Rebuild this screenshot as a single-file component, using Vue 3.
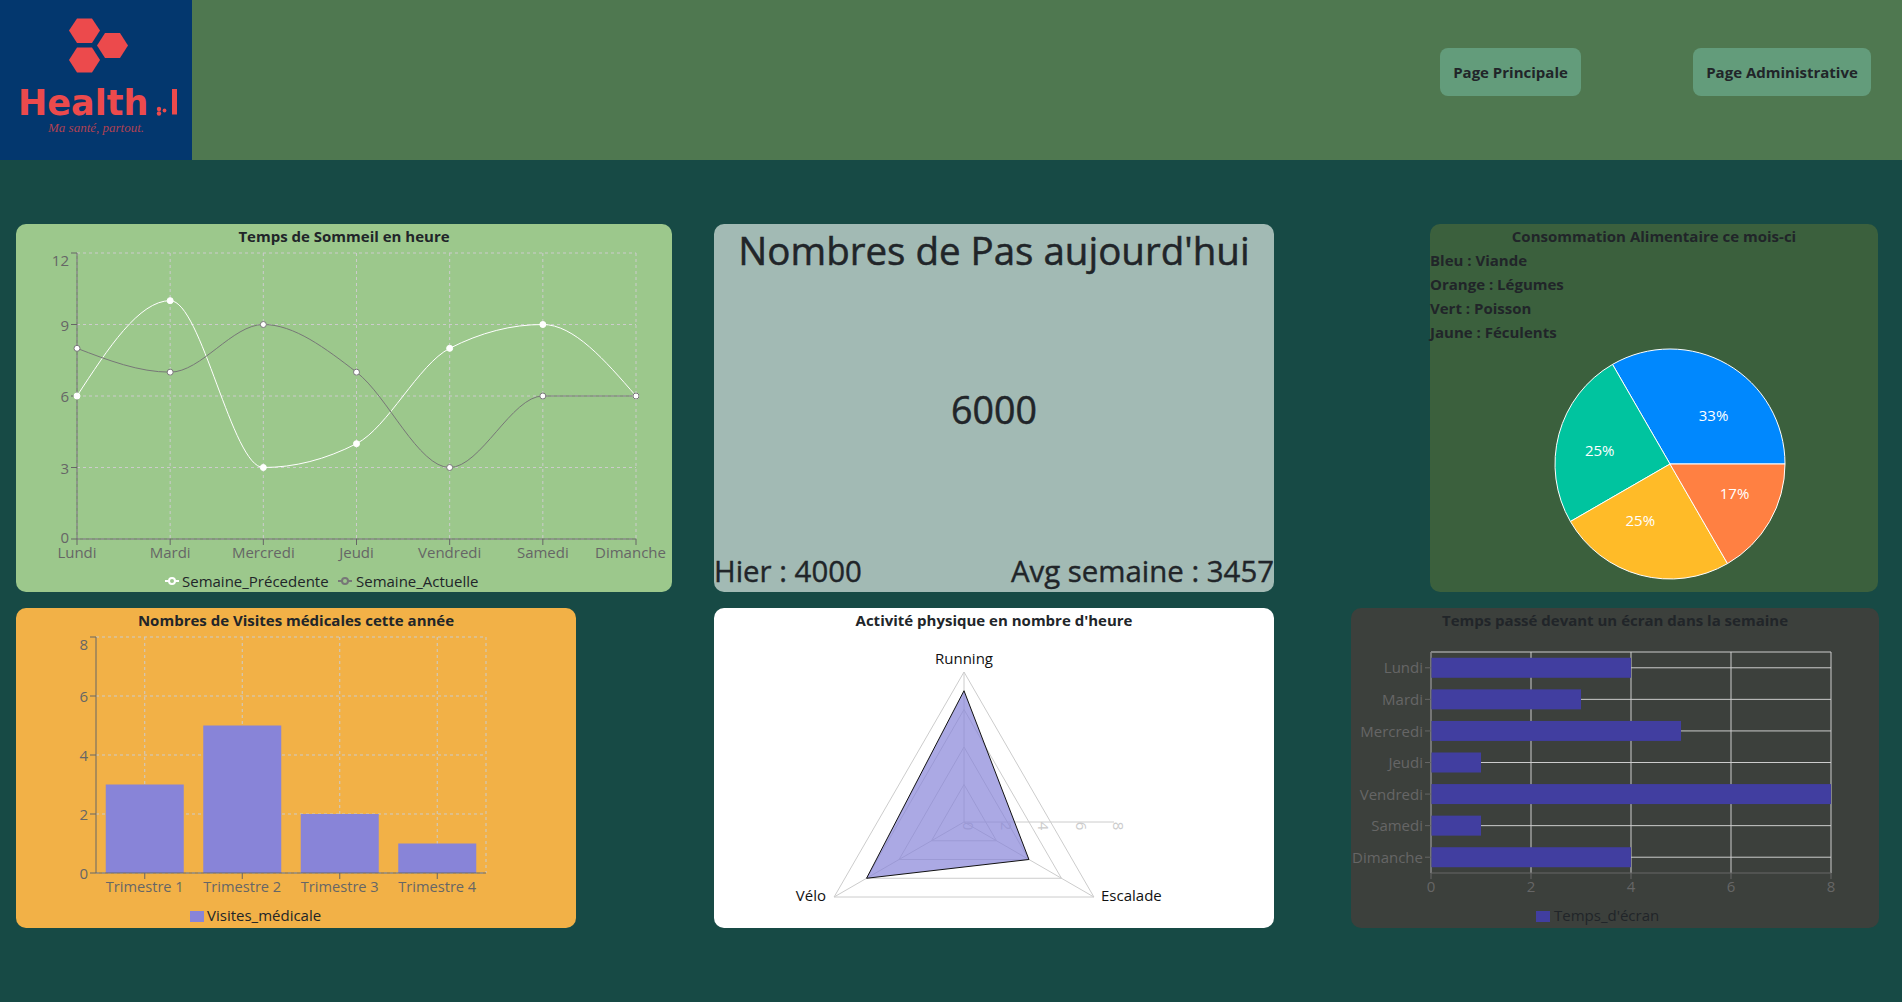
<script setup>
const days = ['Lundi', 'Mardi', 'Mercredi', 'Jeudi', 'Vendredi', 'Samedi', 'Dimanche']

function monotone(pts) {
  const n = pts.length
  const t = new Array(n).fill(0)
  const sign = (v) => (v < 0 ? -1 : 1)
  for (let i = 1; i < n - 1; i++) {
    const [x0, y0] = pts[i - 1]
    const [x1, y1] = pts[i]
    const [x2, y2] = pts[i + 1]
    const h0 = x1 - x0
    const h1 = x2 - x1
    const s0 = (y1 - y0) / h0
    const s1 = (y2 - y1) / h1
    const p = (s0 * h1 + s1 * h0) / (h0 + h1)
    t[i] = (sign(s0) + sign(s1)) * Math.min(Math.abs(s0), Math.abs(s1), 0.5 * Math.abs(p)) || 0
  }
  const h = pts[1][0] - pts[0][0]
  t[0] = (3 * (pts[1][1] - pts[0][1])) / h / 2 - t[1] / 2
  t[n - 1] = (3 * (pts[n - 1][1] - pts[n - 2][1])) / h / 2 - t[n - 2] / 2
  let d = `M${pts[0][0]},${pts[0][1]}`
  for (let i = 1; i < n; i++) {
    const dx = (pts[i][0] - pts[i - 1][0]) / 3
    d += `C${pts[i - 1][0] + dx},${pts[i - 1][1] + dx * t[i - 1]},${pts[i][0] - dx},${pts[i][1] - dx * t[i]},${pts[i][0]},${pts[i][1]}`
  }
  return d
}

/* Sommeil */
const sl = { x0: 77, x1: 636, top: 253, bottom: 539 }
const slX = (i) => sl.x0 + (i * (sl.x1 - sl.x0)) / 6
const slY = (v) => sl.bottom - (v * (sl.bottom - sl.top)) / 12
const prevPts = [6, 10, 3, 4, 8, 9, 6].map((v, i) => [slX(i), slY(v)])
const currPts = [8, 7, 9, 7, 3, 6, 6].map((v, i) => [slX(i), slY(v)])
const prevPath = monotone(prevPts)
const currPath = monotone(currPts)
const slYTicks = [0, 3, 6, 9, 12]
const slYLabel = (v) => (v === 12 ? 260 : v === 0 ? 537 : slY(v))
const slXs = days.map((d, i) => ({ d, x: slX(i), lx: i === 6 ? 630.5 : slX(i) }))

/* Visites */
const vi = { x0: 96, x1: 486, top: 637, bottom: 873 }
const viY = (v) => vi.bottom - (v * (vi.bottom - vi.top)) / 8
const viBand = (vi.x1 - vi.x0) / 4
const viBars = [3, 5, 2, 1].map((v, i) => ({
  label: `Trimestre ${i + 1}`,
  cx: vi.x0 + viBand * (i + 0.5),
  x: vi.x0 + viBand * i + 9.75,
  y: viY(v),
  h: vi.bottom - viY(v),
}))
const viTicks = [0, 2, 4, 6, 8]

/* Aliments */
const pc = { x: 1670, y: 464, r: 115 }
const polar = (cx, cy, r, deg) => [
  cx + r * Math.cos((deg * Math.PI) / 180),
  cy - r * Math.sin((deg * Math.PI) / 180),
]
const slices = [
  { a0: 0, a1: 120, fill: '#0088fe', label: '33%', dy: 1 },
  { a0: 120, a1: 210, fill: '#00c49f', label: '25%', dy: 1 },
  { a0: 210, a1: 300, fill: '#ffbb28', label: '25%', dy: 0 },
  { a0: 300, a1: 360, fill: '#ff8042', label: '17%', dy: 0 },
].map((s) => {
  const [sx, sy] = polar(pc.x, pc.y, pc.r, s.a0)
  const [ex, ey] = polar(pc.x, pc.y, pc.r, s.a1)
  const big = s.a1 - s.a0 > 180 ? 1 : 0
  const mid = (s.a0 + s.a1) / 2
  const [lx, ly] = polar(pc.x, pc.y, pc.r / 2, mid)
  return {
    ...s,
    d: `M${pc.x},${pc.y}L${sx},${sy}A${pc.r},${pc.r} 0 ${big} 0 ${ex},${ey}Z`,
    lx,
    ly: ly + s.dy,
    anchor: lx > pc.x ? 'start' : 'end',
  }
})

/* Radar */
const rd = { x: 964, y: 822, r: 150 }
const axesDeg = [90, -30, 210]
const ring = (v) =>
  axesDeg.map((a) => polar(rd.x, rd.y, (rd.r * v) / 8, a).join(',')).join(' ')
const rings = [2, 4, 6, 8].map(ring)
const spokes = axesDeg.map((a) => polar(rd.x, rd.y, rd.r, a))
const radarShape = [7, 4, 6]
  .map((v, i) => polar(rd.x, rd.y, (rd.r * v) / 8, axesDeg[i]).join(','))
  .join(' ')
const radarTicks = [0, 2, 4, 6, 8].map((v) => ({ v, x: rd.x + (v * rd.r) / 8 }))

/* Ecran */
const ec = { x0: 1431, x1: 1831, top: 652, bottom: 873 }
const ecRow = (ec.bottom - ec.top) / 7
const ecX = (v) => ec.x0 + (v * (ec.x1 - ec.x0)) / 8
const ecRows = [4, 3, 5, 1, 8, 1, 4].map((v, i) => ({
  d: days[i],
  cy: ec.top + ecRow * (i + 0.5),
  w: ecX(v) - ec.x0,
}))
const ecTicks = [0, 2, 4, 6, 8]
</script>

<template>
  <div class="page">
    <header class="top">
      <svg class="logo" viewBox="0 0 192 160" role="img" aria-label="Health.I">
        <polygon class="hex" points="69,30.5 77,18.5 92,18.5 100,30.5 92,43 77,43" />
        <polygon class="hex" points="97,45.5 105,33 120,33 128,45.5 120,58 105,58" />
        <polygon class="hex" points="69,60 77,47.5 92,47.5 100,60 92,72.5 77,72.5" />
        <text class="logo-word" x="18" y="114.5">Health</text>
        <circle class="hex" cx="159" cy="109" r="2.2" />
        <circle class="hex" cx="159" cy="113.5" r="2.2" />
        <circle class="hex" cx="164.5" cy="110.5" r="1.9" />
        <rect class="hex" x="172" y="89" width="5" height="25.5" />
        <text class="logo-tag" x="48" y="132">Ma santé, partout.</text>
      </svg>
      <nav class="nav">
        <a class="btn btn-main">Page Principale</a>
        <a class="btn btn-admin">Page Administrative</a>
      </nav>
    </header>

    <main class="board">
      <section class="row">
        <article class="card sleep">
          <h6 class="title">Temps de Sommeil en heure</h6>
          <svg class="plot" width="656" height="344" viewBox="16 248 656 344">
            <g class="grid">
              <line v-for="v in slYTicks" :key="v" :x1="sl.x0" :x2="sl.x1" :y1="slY(v)" :y2="slY(v)" />
              <line v-for="t in slXs" :key="t.d" :x1="t.x" :x2="t.x" :y1="sl.top" :y2="sl.bottom" />
            </g>
            <g class="axis">
              <line :x1="sl.x0" :x2="sl.x0" :y1="sl.top" :y2="sl.bottom" />
              <line :x1="sl.x0" :x2="sl.x1" :y1="sl.bottom" :y2="sl.bottom" />
              <line v-for="v in slYTicks" :key="v" :x1="sl.x0 - 6" :x2="sl.x0" :y1="slY(v)" :y2="slY(v)" />
              <line v-for="t in slXs" :key="t.d" :x1="t.x" :x2="t.x" :y1="sl.bottom" :y2="sl.bottom + 6" />
            </g>
            <g class="tick">
              <text v-for="v in slYTicks" :key="v" x="69" :y="slYLabel(v)" text-anchor="end" dominant-baseline="central">{{ v }}</text>
              <text v-for="t in slXs" :key="t.d" :x="t.lx" y="552" text-anchor="middle" dominant-baseline="central">{{ t.d }}</text>
            </g>
            <path class="line-prev" :d="prevPath" />
            <path class="line-curr" :d="currPath" />
            <circle v-for="(p, i) in prevPts" :key="i" class="dot-prev" :cx="p[0]" :cy="p[1]" r="3" />
            <circle v-for="(p, i) in currPts" :key="i" class="dot-curr" :cx="p[0]" :cy="p[1]" r="3" />
            <g class="legend-mark">
              <line class="mark-prev" x1="165" x2="179" y1="581" y2="581" />
              <circle class="dot-mark-prev" cx="172" cy="581" r="3" />
              <line class="mark-curr" x1="338" x2="352" y1="581" y2="581" />
              <circle class="dot-mark-curr" cx="345" cy="581" r="3" />
            </g>
            <text class="legend" x="182" y="581" dominant-baseline="central">Semaine_Précedente</text>
            <text class="legend" x="356" y="581" dominant-baseline="central">Semaine_Actuelle</text>
          </svg>
        </article>

        <article class="card steps">
          <h1 class="steps-title">Nombres de Pas aujourd'hui</h1>
          <div class="steps-value">6000</div>
          <div class="steps-foot">
            <span>Hier : 4000</span>
            <span>Avg semaine : 3457</span>
          </div>
        </article>

        <article class="card food">
          <h6 class="title">Consommation Alimentaire ce mois-ci</h6>
          <h6 class="food-line">Bleu : Viande</h6>
          <h6 class="food-line">Orange : Légumes</h6>
          <h6 class="food-line">Vert : Poisson</h6>
          <h6 class="food-line">Jaune : Féculents</h6>
          <svg class="plot" width="448" height="248" viewBox="1430 344 448 248">
            <path v-for="s in slices" :key="s.a0" class="slice" :d="s.d" :fill="s.fill" />
            <text v-for="s in slices" :key="s.a0" class="pie-label" :x="s.lx" :y="s.ly" :text-anchor="s.anchor" dominant-baseline="central">{{ s.label }}</text>
          </svg>
        </article>
      </section>

      <section class="row">
        <article class="card visits">
          <h6 class="title">Nombres de Visites médicales cette année</h6>
          <svg class="plot" width="560" height="296" viewBox="16 632 560 296">
            <g class="grid">
              <line v-for="v in viTicks" :key="v" :x1="vi.x0" :x2="vi.x1" :y1="viY(v)" :y2="viY(v)" />
              <line v-for="b in viBars" :key="b.label" :x1="b.cx" :x2="b.cx" :y1="vi.top" :y2="vi.bottom" />
              <line :x1="vi.x1" :x2="vi.x1" :y1="vi.top" :y2="vi.bottom" />
            </g>
            <rect v-for="b in viBars" :key="b.label" class="bar-visit" :x="b.x" :y="b.y" width="78" :height="b.h" />
            <g class="axis">
              <line :x1="vi.x0" :x2="vi.x0" :y1="vi.top" :y2="vi.bottom" />
              <line :x1="vi.x0" :x2="vi.x1" :y1="vi.bottom" :y2="vi.bottom" />
              <line v-for="v in viTicks" :key="v" :x1="vi.x0 - 6" :x2="vi.x0" :y1="viY(v)" :y2="viY(v)" />
              <line v-for="b in viBars" :key="b.label" :x1="b.cx" :x2="b.cx" :y1="vi.bottom" :y2="vi.bottom + 6" />
            </g>
            <g class="tick">
              <text v-for="v in viTicks" :key="v" x="88" :y="v === 8 ? 644 : viY(v)" text-anchor="end" dominant-baseline="central">{{ v }}</text>
              <text v-for="b in viBars" :key="b.label" class="tick-tight" :x="b.cx" y="886" text-anchor="middle" dominant-baseline="central">{{ b.label }}</text>
            </g>
            <rect class="bar-visit" x="190" y="911" width="14" height="11" />
            <text class="legend" x="207" y="915" dominant-baseline="central">Visites_médicale</text>
          </svg>
        </article>

        <article class="card radar">
          <h6 class="title">Activité physique en nombre d'heure</h6>
          <svg class="plot" width="560" height="296" viewBox="714 632 560 296">
            <g class="web">
              <polygon v-for="(r, i) in rings" :key="i" :points="r" />
              <line v-for="(s, i) in spokes" :key="i" :x1="rd.x" :y1="rd.y" :x2="s[0]" :y2="s[1]" />
              <line :x1="rd.x" :y1="rd.y" :x2="rd.x + rd.r" :y2="rd.y" />
            </g>
            <text v-for="t in radarTicks" :key="t.v" class="radar-tick" :transform="`translate(${t.x + 5} 826) rotate(90)`" text-anchor="middle" dominant-baseline="central">{{ t.v }}</text>
            <polygon class="radar-shape" :points="radarShape" />
            <text class="radar-label" x="964" y="658" text-anchor="middle" dominant-baseline="central">Running</text>
            <text class="radar-label" x="826" y="895" text-anchor="end" dominant-baseline="central">Vélo</text>
            <text class="radar-label" x="1101" y="895" dominant-baseline="central">Escalade</text>
          </svg>
        </article>

        <article class="card screen">
          <h6 class="title">Temps passé devant un écran dans la semaine</h6>
          <svg class="plot" width="528" height="296" viewBox="1351 632 528 296">
            <g class="solid-grid">
              <line v-for="v in ecTicks" :key="v" :x1="ecX(v)" :x2="ecX(v)" :y1="ec.top" :y2="ec.bottom" />
              <line :x1="ec.x0" :x2="ec.x1" :y1="ec.top" :y2="ec.top" />
              <line v-for="r in ecRows" :key="r.d" :x1="ec.x0" :x2="ec.x1" :y1="r.cy" :y2="r.cy" />
            </g>
            <rect v-for="r in ecRows" :key="r.d" class="bar-screen" :x="ec.x0" :y="r.cy - 10" :width="r.w" height="20" />
            <g class="axis">
              <line :x1="ec.x0" :x2="ec.x0" :y1="ec.top" :y2="ec.bottom" />
              <line :x1="ec.x0" :x2="ec.x1" :y1="ec.bottom" :y2="ec.bottom" />
              <line v-for="r in ecRows" :key="r.d" :x1="ec.x0 - 6" :x2="ec.x0" :y1="r.cy" :y2="r.cy" />
              <line v-for="v in ecTicks" :key="v" :x1="ecX(v)" :x2="ecX(v)" :y1="ec.bottom" :y2="ec.bottom + 6" />
            </g>
            <g class="tick">
              <text v-for="r in ecRows" :key="r.d" x="1423" :y="r.cy - 0.4" text-anchor="end" dominant-baseline="central">{{ r.d }}</text>
              <text v-for="v in ecTicks" :key="v" :x="ecX(v)" y="886" text-anchor="middle" dominant-baseline="central">{{ v }}</text>
            </g>
            <rect class="bar-screen" x="1536" y="911" width="14" height="11" />
            <text class="legend" x="1554" y="915" dominant-baseline="central">Temps_d'écran</text>
          </svg>
        </article>
      </section>
    </main>
  </div>
</template>

<style>
html,
body {
  background: #174a45;
}
</style>

<style scoped>
.page {
  min-height: 1002px;
  font-family: "Open Sans", "Noto Sans", sans-serif;
  color: #212529;
  font-size: 15px;
}
.top {
  display: flex;
  align-items: flex-start;
  justify-content: space-between;
  height: 160px;
  background: #4f7850;
  padding-right: 31px;
}
.logo {
  width: 192px;
  height: 160px;
  background: #03376e;
  display: block;
}
.hex {
  fill: #ec4a4c;
}
.logo-word {
  font-family: "DejaVu Sans", sans-serif;
  font-weight: 700;
  font-size: 35px;
  fill: #ec4a4c;
}
.logo-tag {
  font-family: "Liberation Serif", serif;
  font-style: italic;
  font-size: 13px;
  fill: #b04152;
}
.nav {
  display: flex;
  gap: 112px;
  margin-top: 48px;
}
.btn {
  display: flex;
  align-items: center;
  justify-content: center;
  height: 48px;
  border-radius: 8px;
  background: #639c7b;
  font-weight: 700;
  font-size: 15px;
}
.btn-main {
  width: 141px;
}
.btn-admin {
  width: 178px;
}
.board {
  display: flex;
  flex-direction: column;
  gap: 16px;
  padding: 64px 0 0 16px;
}
.row {
  display: flex;
}
.card {
  border-radius: 10px;
}
.title,
.food-line {
  margin: 0;
  font-size: 15px;
  line-height: 24px;
  font-weight: 700;
}
.title {
  text-align: center;
}
.plot {
  display: block;
}
.sleep {
  width: 656px;
  height: 368px;
  background: #9cc88c;
}
.steps {
  width: 560px;
  height: 368px;
  margin-left: 42px;
  background: #a2bab4;
  display: flex;
  flex-direction: column;
}
.steps-title {
  margin: 2px 0 0;
  font-size: 38.5px;
  line-height: 48px;
  font-weight: 400;
  -webkit-text-stroke: 0.5px #212529;
  text-align: center;
}
.steps-value {
  flex: 1;
  display: flex;
  align-items: center;
  justify-content: center;
  font-size: 37.6px;
  font-weight: 400;
  -webkit-text-stroke: 0.5px #212529;
  padding-bottom: 8px;
}
.steps-foot {
  display: flex;
  justify-content: space-between;
  font-size: 29.4px;
  font-weight: 400;
  -webkit-text-stroke: 0.4px #212529;
  line-height: 38px;
  padding-bottom: 2px;
}
.food {
  width: 448px;
  height: 368px;
  margin-left: 156px;
  background: #3b603d;
}
.visits {
  width: 560px;
  height: 320px;
  background: #f2b147;
}
.radar {
  width: 560px;
  height: 320px;
  margin-left: 138px;
  background: #ffffff;
}
.screen {
  width: 528px;
  height: 320px;
  margin-left: 77px;
  background: #3c403c;
}
.grid line {
  stroke: #ccc;
  stroke-dasharray: 3 3;
}
.axis line {
  stroke: #666;
}
.tick text {
  fill: #666;
  font-size: 15px;
}
.tick .tick-tight {
  font-size: 14.6px;
}
.legend {
  fill: #212529;
  font-size: 15px;
}
.line-prev,
.line-curr {
  fill: none;
}
.line-prev {
  stroke: #fff;
}
.line-curr {
  stroke: #777;
}
.dot-prev {
  fill: #fff;
  stroke: #fff;
}
.dot-curr {
  fill: #fff;
  stroke: #777;
}
.mark-prev {
  stroke: #fff;
  stroke-width: 2;
}
.mark-curr {
  stroke: #777;
  stroke-width: 2;
}
.dot-mark-prev {
  fill: #9cc88c;
  stroke: #fff;
  stroke-width: 2;
}
.dot-mark-curr {
  fill: #9cc88c;
  stroke: #777;
  stroke-width: 2;
}
.slice {
  stroke: #fff;
}
.pie-label {
  fill: #fff;
  font-size: 15px;
}
.bar-visit {
  fill: #8884d8;
}
.web polygon {
  fill: none;
  stroke: #ccc;
}
.web line {
  stroke: #ccc;
}
.radar-tick {
  fill: #ccc;
  font-size: 15px;
}
.radar-shape {
  fill: #8884d8;
  fill-opacity: 0.7;
  stroke: #111;
}
.radar-label {
  fill: #111;
  font-size: 15px;
}
.solid-grid line {
  stroke: #ccc;
}
.bar-screen {
  fill: #413ea0;
}
</style>
